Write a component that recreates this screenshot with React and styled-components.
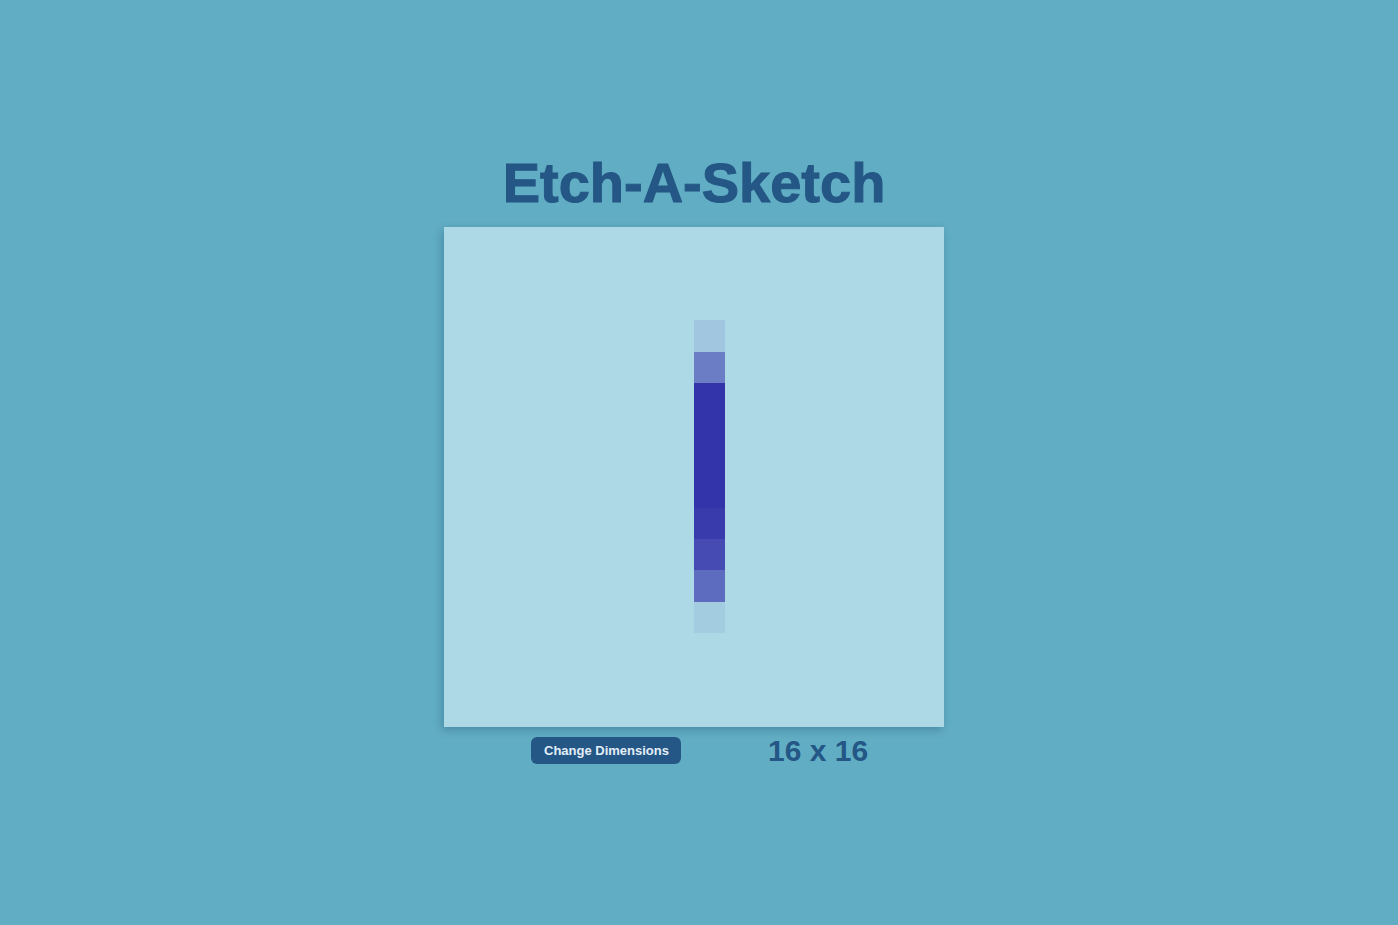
import styled, { createGlobalStyle } from 'styled-components';

const SIZE = 16;

// opacity of the painted cells, keyed by "row-col"
const painted = {
  '3-8': 0.1,
  '4-8': 0.55,
  '5-8': 1,
  '6-8': 1,
  '7-8': 1,
  '8-8': 1,
  '9-8': 0.95,
  '10-8': 0.86,
  '11-8': 0.66,
  '12-8': 0.07,
};

const GlobalStyle = createGlobalStyle`
  html, body {
    margin: 0;
    padding: 0;
    background: #61adc3;
    font-family: "Liberation Sans", Arial, sans-serif;
  }
`;

const Page = styled.main`
  height: 100vh;
  box-sizing: border-box;
  padding: 0 10px 7px 0;
  display: flex;
  flex-direction: column;
  align-items: center;
  justify-content: center;
`;

const Title = styled.h1`
  margin: 0 0 12px;
  font-size: 56px;
  font-weight: 900;
  line-height: 64px;
  color: #245785;
  -webkit-text-stroke: 1px #245785;
`;

const Board = styled.div`
  width: 500px;
  height: 500px;
  display: grid;
  grid-template-columns: repeat(${(p) => p.size}, 1fr);
  grid-template-rows: repeat(${(p) => p.size}, 1fr);
  background: #add8e6;
  box-shadow: -2px 3px 8px rgba(0, 40, 80, 0.25);
`;

const Cell = styled.div`
  background: rgba(51, 51, 170, ${(p) => p.opacity});
`;

const Controls = styled.div`
  width: 500px;
  box-sizing: border-box;
  display: flex;
  align-items: center;
  padding: 7px 0 0 87px;
  gap: 87px;
`;

const Button = styled.button`
  height: 27px;
  padding: 0 12px 0 13px;
  border: none;
  border-radius: 6px;
  background: #245785;
  color: #e3eef8;
  font-family: inherit;
  font-size: 13px;
  font-weight: bold;
  cursor: pointer;
`;

const Dimensions = styled.span`
  font-size: 30px;
  font-weight: bold;
  color: #245785;
`;

export default function App() {
  const cells = [];
  for (let r = 0; r < SIZE; r++) {
    for (let c = 0; c < SIZE; c++) {
      cells.push(<Cell key={`${r}-${c}`} opacity={painted[`${r}-${c}`] || 0} />);
    }
  }

  return (
    <>
      <GlobalStyle />
      <Page>
        <Title>Etch-A-Sketch</Title>
        <Board size={SIZE}>{cells}</Board>
        <Controls>
          <Button>Change Dimensions</Button>
          <Dimensions>
            {SIZE} x {SIZE}
          </Dimensions>
        </Controls>
      </Page>
    </>
  );
}
